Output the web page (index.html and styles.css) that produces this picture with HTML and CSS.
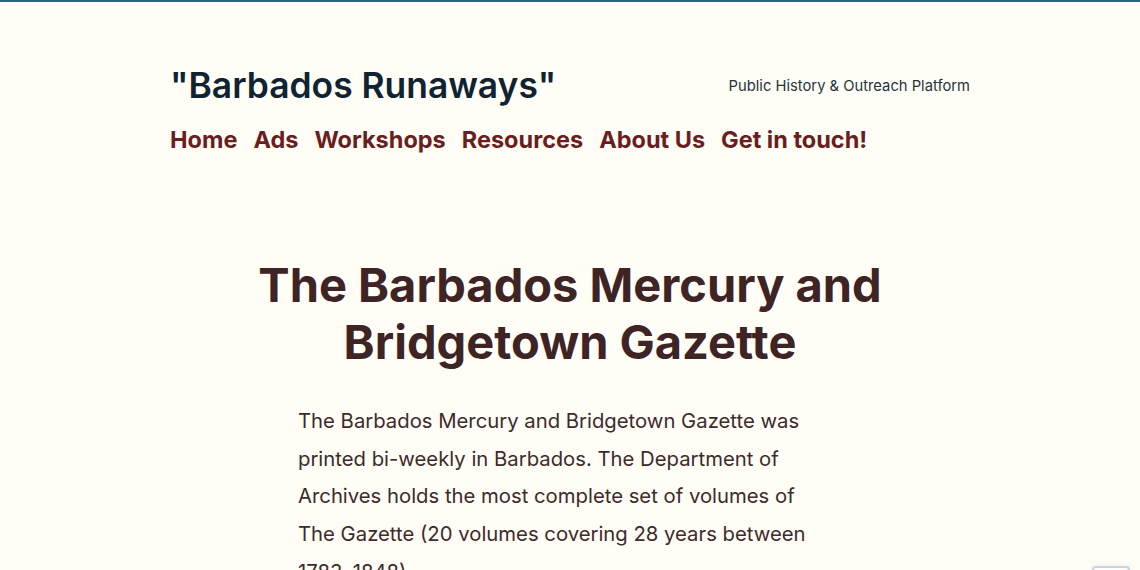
FILE: index.html
```html
<!DOCTYPE html>
<html lang="en">
<head>
<meta charset="utf-8">
<title>The Barbados Mercury and Bridgetown Gazette – "Barbados Runaways"</title>
<link rel="stylesheet" href="styles.css">
</head>
<body>
<div class="page">
  <header class="site-header">
    <div class="brand-row">
      <p class="site-title">"Barbados Runaways"</p>
      <p class="site-tagline">Public History &amp; Outreach Platform</p>
    </div>
    <nav class="main-nav">
      <a href="#">Home</a>
      <a href="#">Ads</a>
      <a href="#">Workshops</a>
      <a href="#">Resources</a>
      <a href="#">About Us</a>
      <a href="#">Get in touch!</a>
    </nav>
  </header>
  <main class="content">
    <h1 class="entry-title">The Barbados Mercury and Bridgetown Gazette</h1>
    <div class="entry-body">
      <p>The Barbados Mercury and Bridgetown Gazette was printed bi-weekly in Barbados. The Department of Archives holds the most complete set of volumes of The Gazette (20 volumes covering 28 years between 1783–1848).</p>
    </div>
  </main>
</div>
<a class="to-top" href="#" aria-label="Back to top"></a>
</body>
</html>
```
FILE: styles.css
```css
html, body {
  margin: 0;
  padding: 0;
}
body {
  background: #fffdf6;
  border-top: 2px solid #2f6483;
  font-family: Inter, "Noto Sans", sans-serif;
  color: #3d2b2b;
  overflow: hidden;
}
.page {
  max-width: 800px;
  margin: 0 auto;
}
.site-header {
  padding-top: 62px;
}
.brand-row {
  display: flex;
  justify-content: space-between;
  align-items: center;
}
.site-title {
  margin: 0;
  font-size: 35.4px;
  font-weight: 600;
  line-height: 44px;
  color: #0f2330;
}
.site-tagline {
  margin: 0;
  font-size: 14.75px;
  color: #26343c;
}
.main-nav {
  display: flex;
  gap: 16px;
  margin-top: 17px;
}
.main-nav a {
  font-size: 23.5px;
  font-weight: 700;
  line-height: 30px;
  color: #6a1e1e;
  text-decoration: none;
}
.content {
  padding-top: 102px;
}
.entry-title {
  margin: 0 auto;
  max-width: 640px;
  text-align: center;
  font-size: 47px;
  font-weight: 700;
  line-height: 56.5px;
  color: #3e2424;
}
.entry-body {
  box-sizing: border-box;
  max-width: 544px;
  margin: 32px auto 0;
  padding-right: 24px;
}
.entry-body p {
  margin: 0;
  font-size: 20.3px;
  line-height: 37.7px;
  color: #3d2b2b;
}
.to-top {
  position: fixed;
  right: 10px;
  top: 566px;
  width: 34px;
  height: 34px;
  background: #ffffff;
  border: 2px solid #c9d6e0;
  border-radius: 4px;
  box-shadow: 0 0 6px rgba(0,0,0,0.08);
}
```
